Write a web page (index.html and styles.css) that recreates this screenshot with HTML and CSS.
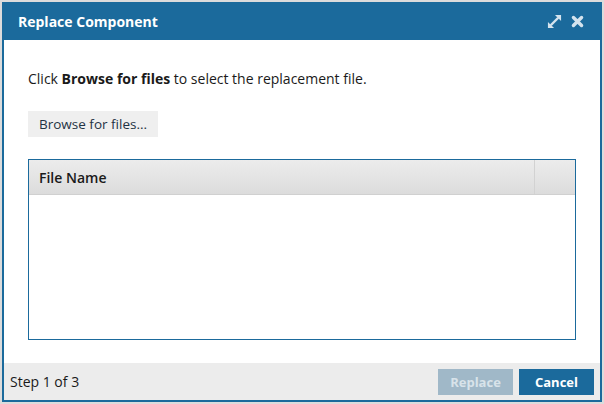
FILE: index.html
```html
<!DOCTYPE html>
<html lang="en">
<head>
  <meta charset="UTF-8">
  <meta name="viewport" content="width=device-width, initial-scale=1.0">
  <title>Replace Component</title>
  <link rel="stylesheet" href="styles.css">
</head>
<body>

  <div class="dialog">
    <div class="dialog-title">
      <span class="title-text">Replace Component</span>
      <div class="title-tools">
        <!-- maximize -->
        <svg class="tool" width="15" height="15" viewBox="0 0 16 16">
          <path d="M4 12 12 4" stroke="currentColor" stroke-width="2.6"/>
          <path d="M8.5 1h6.5v6.5z M7.5 15H1V8.5z" fill="currentColor"/>
        </svg>
        <!-- close -->
        <svg class="tool" width="13" height="13" viewBox="0 0 16 16">
          <path d="M3 3 13 13 M13 3 3 13" stroke="currentColor" stroke-width="4.2" stroke-linecap="round"/>
        </svg>
      </div>
    </div>

    <div class="dialog-body">
      <p class="hint">Click <b>Browse for files</b> to select the replacement file.</p>
      <button class="btn-browse">Browse for files...</button>

      <div class="file-grid">
        <div class="grid-header">
          <div class="col-name">File Name</div>
          <div class="col-extra"></div>
        </div>
        <div class="grid-rows"></div>
      </div>
    </div>

    <div class="dialog-footer">
      <span class="step">Step 1 of 3</span>
      <div class="actions">
        <button class="btn btn-disabled" disabled>Replace</button>
        <button class="btn btn-primary">Cancel</button>
      </div>
    </div>
  </div>

</body>
</html>
```

FILE: styles.css
```css
body {
  margin: 0;
  padding: 2px;
  background-color: #dcdcdc;
  font-family: "Open Sans", Arial, sans-serif;
  font-size: 14px;
  color: #1a1a1a;
}

.dialog {
  width: 596px;
  height: 396px;
  border: 2px solid #1b6a9c;
  background-color: #fff;
  display: flex;
  flex-direction: column;
}

.dialog-title {
  height: 34px;
  background-color: #1b6a9c;
  color: #fff;
  display: flex;
  align-items: center;
  justify-content: space-between;
  padding: 0 16px 2px 14px;
}

.title-text {
  font-weight: 700;
  font-size: 14px;
}

.title-tools {
  display: flex;
  align-items: center;
  gap: 9px;
  color: #d4e3ee;
}

.dialog-body {
  flex: 1;
  padding: 29px 24px 23px 24px;
  display: flex;
  flex-direction: column;
}

.hint {
  margin: 0;
  line-height: 20px;
}

.btn-browse {
  align-self: flex-start;
  margin-top: 22px;
  height: 26px;
  padding: 0 11px;
  border: none;
  background-color: #efefef;
  font-family: inherit;
  font-size: 13.5px;
  color: #1f3344;
}

.file-grid {
  flex: 1;
  margin-top: 22px;
  border: 1px solid #1b6a9c;
  display: flex;
  flex-direction: column;
}

.grid-header {
  height: 34px;
  display: flex;
  background: linear-gradient(#ececec, #dcdcdc);
  border-bottom: 1px solid #d0d0d0;
}

.col-name {
  flex: 1;
  padding-left: 10px;
  display: flex;
  align-items: center;
  font-weight: 600;
}

.col-extra {
  width: 40px;
  border-left: 1px solid #d2d2d2;
}

.grid-rows {
  flex: 1;
}

.dialog-footer {
  height: 37px;
  background-color: #ececec;
  display: flex;
  align-items: center;
  justify-content: space-between;
  padding: 0 6px 0 6px;
}

.step {
  font-size: 14px;
}

.actions {
  display: flex;
  gap: 6px;
}

.btn {
  height: 26px;
  width: 75px;
  border: none;
  font-family: inherit;
  font-size: 13px;
  font-weight: 700;
}

.btn-disabled {
  background-color: #a0b8c8;
  color: #d8e3ea;
}

.btn-primary {
  background-color: #1b6a9c;
  color: #fff;
}
```
